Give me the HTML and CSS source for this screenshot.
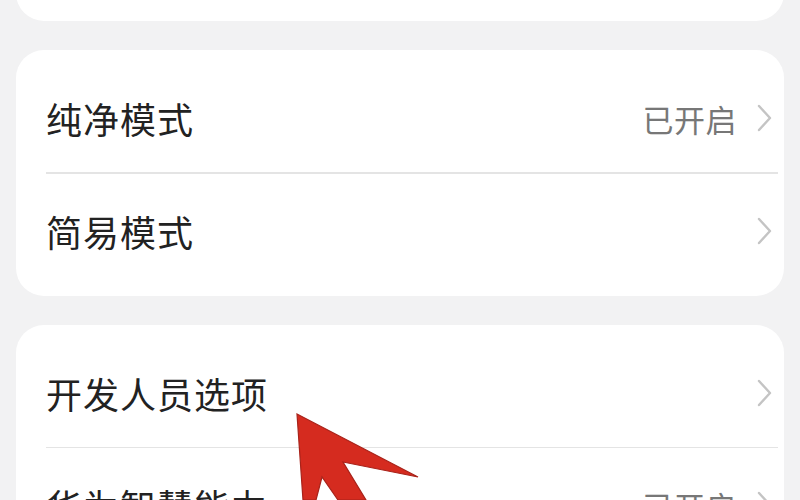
FILE: index.html
```html
<!DOCTYPE html>
<html lang="zh-CN">
<head>
<meta charset="utf-8">
<link rel="stylesheet" href="styles.css">
</head>
<body>
<div class="page">
  <div class="card card-top"></div>
  <div class="card">
    <div class="row row-first">
      <span class="label">纯净模式</span>
      <span class="value">已开启</span>
      <svg class="chev" viewBox="0 0 15 28"><path d="M2 2 L13 14 L2 26" fill="none" stroke="#c4c4c4" stroke-width="2.4" stroke-linecap="round" stroke-linejoin="round"/></svg>
    </div>
    <div class="divider"></div>
    <div class="row row-last">
      <span class="label">简易模式</span>
      <svg class="chev" viewBox="0 0 15 28"><path d="M2 2 L13 14 L2 26" fill="none" stroke="#c4c4c4" stroke-width="2.4" stroke-linecap="round" stroke-linejoin="round"/></svg>
    </div>
  </div>
  <div class="card">
    <div class="row row-first">
      <span class="label">开发人员选项</span>
      <svg class="chev" viewBox="0 0 15 28"><path d="M2 2 L13 14 L2 26" fill="none" stroke="#c4c4c4" stroke-width="2.4" stroke-linecap="round" stroke-linejoin="round"/></svg>
    </div>
    <div class="divider"></div>
    <div class="row row-last">
      <span class="label">华为智慧能力</span>
      <span class="value">已开启</span>
      <svg class="chev" viewBox="0 0 15 28"><path d="M2 2 L13 14 L2 26" fill="none" stroke="#c4c4c4" stroke-width="2.4" stroke-linecap="round" stroke-linejoin="round"/></svg>
    </div>
  </div>
</div>
<svg class="arrow" viewBox="0 0 800 500" width="800" height="500">
  <polygon points="297,414 418,477 343,462 366,500 338,500 322,477 316,500 303,500" fill="#d52b1f" stroke="#a8231a" stroke-width="1.2" stroke-linejoin="miter"/>
</svg>
</body>
</html>
```
FILE: styles.css
```css
html, body {
  margin: 0;
  padding: 0;
}
body {
  width: 800px;
  height: 500px;
  overflow: hidden;
  background: #f2f2f3;
  font-family: "Noto Sans CJK SC", "Noto Sans", sans-serif;
  position: relative;
}
.page {
  padding: 0 16px;
  display: flex;
  flex-direction: column;
  gap: 29px;
  margin-top: -100px;
}
.card {
  background: #ffffff;
  border-radius: 28px;
  display: flex;
  flex-direction: column;
}
.card-top {
  height: 121px;
}
.row {
  display: flex;
  align-items: center;
  height: 122px;
  box-sizing: border-box;
  padding: 0 12px 0 30px;
}
.row-first {
  padding-top: 14px;
}
.row-last {
  padding-bottom: 8px;
}
.label {
  flex: 1;
  font-size: 36px;
  color: #222222;
  letter-spacing: 1px;
}
.value {
  font-size: 31px;
  color: #777777;
  margin-right: 20px;
  letter-spacing: 0.5px;
}
.chev {
  width: 15px;
  height: 28px;
  flex: none;
}
.divider {
  height: 1.5px;
  background: #e4e4e4;
  margin: 0 6px 0 30px;
}
.arrow {
  position: absolute;
  left: 0;
  top: 0;
}
```
